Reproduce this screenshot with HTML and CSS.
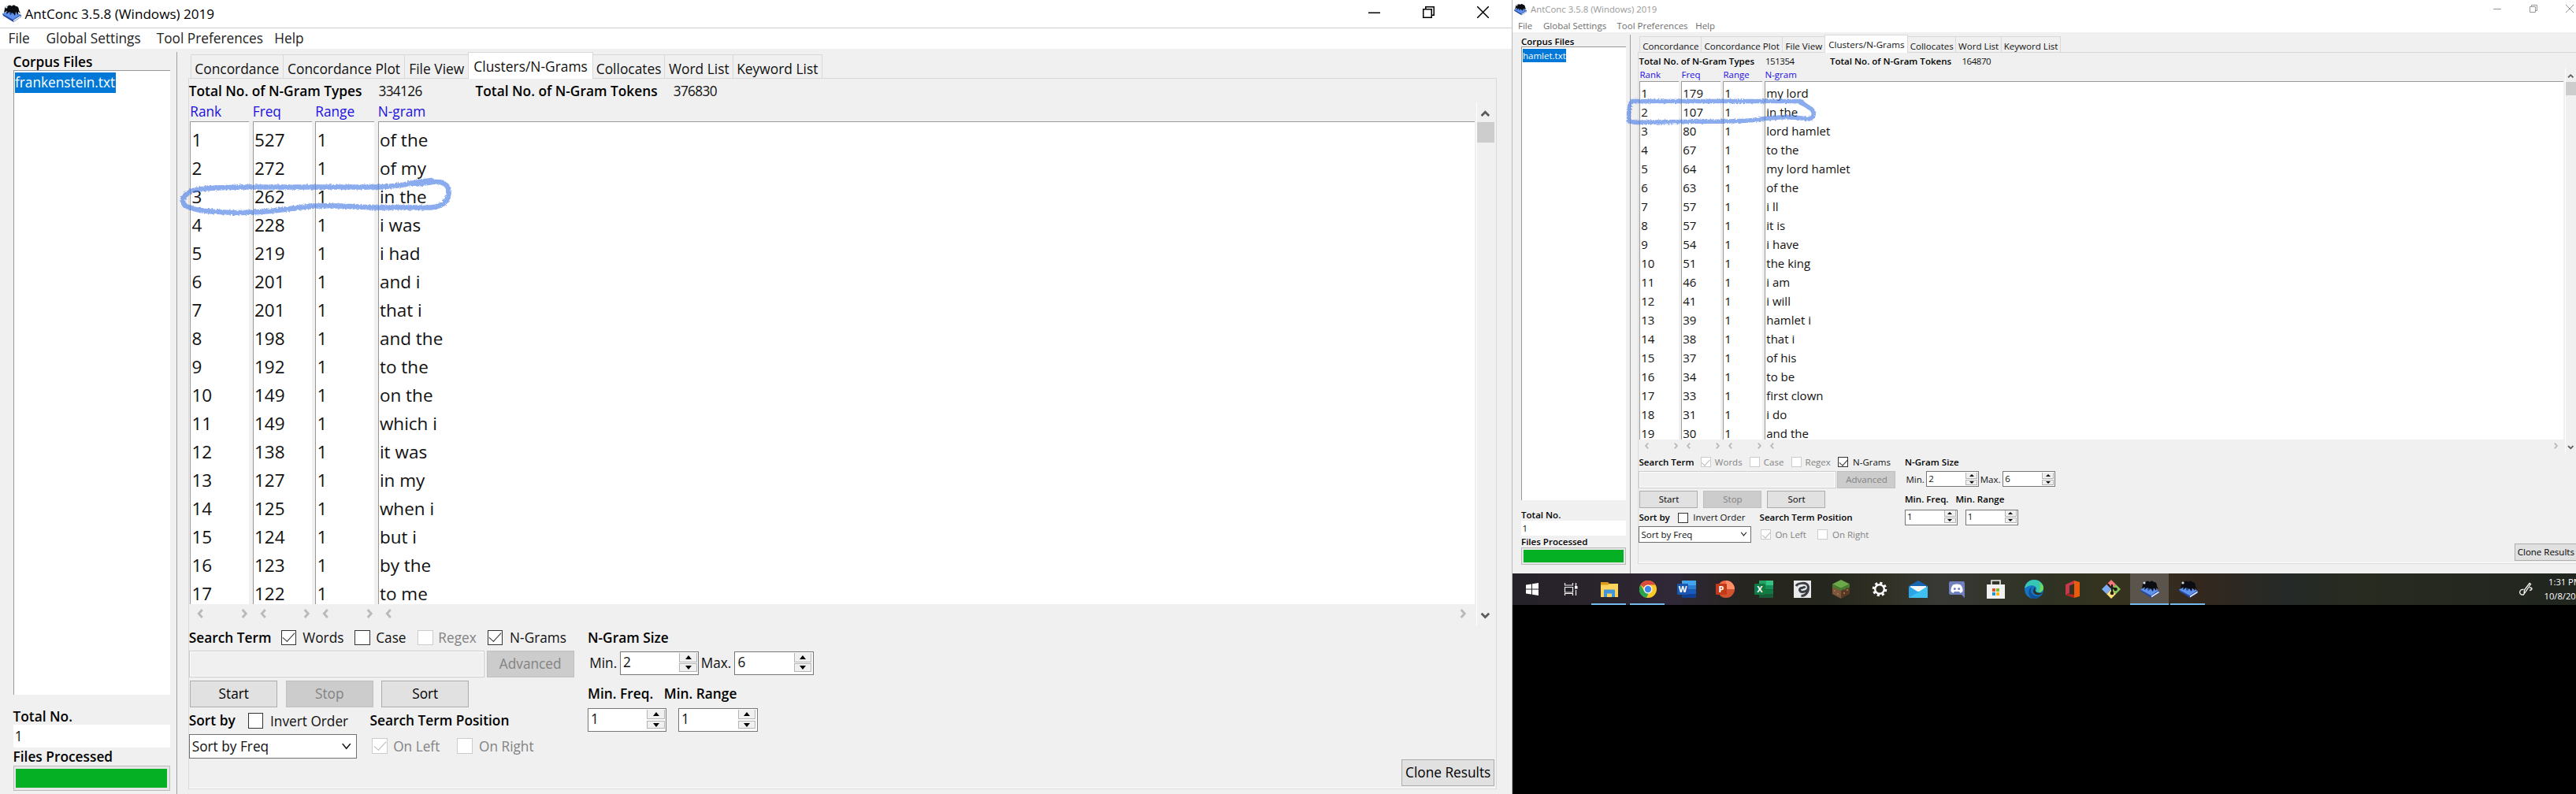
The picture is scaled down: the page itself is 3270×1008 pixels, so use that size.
FILE: index.html
```html
<!DOCTYPE html>
<html lang="en">
<head>
<meta charset="utf-8">
<title>AntConc 3.5.8 (Windows) 2019</title>
<link rel="stylesheet" href="styles.css">
</head>
<body>
<svg class="defs" aria-hidden="true">
  <defs>
    <symbol id="left" viewBox="0 0 8 12"><path d="M6.500 1 2 6l4.500 5" fill="none" stroke="currentColor" stroke-width="2.800"/></symbol>
    <symbol id="right" viewBox="0 0 8 12"><path d="M1.500 1 6 6l-4.500 5" fill="none" stroke="currentColor" stroke-width="2.800"/></symbol>
    <symbol id="up" viewBox="0 0 12 8"><path d="M1.500 7 6 2.500 10.500 7" fill="none" stroke="currentColor" stroke-width="2.600"/></symbol>
    <symbol id="down" viewBox="0 0 12 8"><path d="M1.500 1 6 5.500 10.500 1" fill="none" stroke="currentColor" stroke-width="2.600"/></symbol>
    <symbol id="drop" viewBox="0 0 12 8"><path d="M1.500 1 6 6.500 10.500 1" fill="none" stroke="currentColor" stroke-width="1.400"/></symbol>
    <symbol id="min" viewBox="0 0 10 10"><path d="M0 5.500h10" stroke="currentColor"/></symbol>
    <symbol id="restore" viewBox="0 0 10 10"><path d="M.5 2.500h7v7h-7zM2.500 2.500v-2h7v7h-2" fill="none" stroke="currentColor"/></symbol>
    <symbol id="close" viewBox="0 0 10 10"><path d="M0 0l10 10M10 0 0 10" stroke="currentColor"/></symbol>
    <symbol id="ant" viewBox="0 0 24 24">
      <path d="M0 12.500 10 8l14 6v2.500L14 23 1 15z" fill="#274a9e"/>
      <path d="M0 12.500 10 8l13 5.500L13.500 20z" fill="#5e92ec"/>
      <path d="M14 20.500l9.500-6v2L14 22.500z" fill="#dfe9fb"/>
      <path d="M3 6c0-3 2-4 4-3 1-2 4-1 5 0 1-2 4-2 5 0 3 0 4 2 4 5l2 4-3-2v4l-3-4-1 5-3-4-3 3-1-4-4 3 1-4-4 2z" fill="#0b0d12"/>
      <circle cx="5" cy="4" r="1.600" fill="#d8dde6"/><path d="M9 10l4 2-3 2z" fill="#2b4f9c"/>
    </symbol>
  </defs>
</svg>

<div class="desktop">
<section class="window win-a">
  <header class="titlebar"><svg class="appicon"><use href="#ant"/></svg><span>AntConc 3.5.8 (Windows) 2019</span>
    <div class="caption"><svg><use href="#min"/></svg><svg><use href="#restore"/></svg><svg><use href="#close"/></svg></div></header>
  <nav class="menu"><span>File</span><span>Global Settings</span><span>Tool Preferences</span><span>Help</span></nav>
  <div class="body">
    <aside class="side">
      <b>Corpus Files</b>
      <div class="files"><span>frankenstein.txt</span></div>
      <b class="total">Total No.</b>
      <div class="count">1</div>
      <b class="processed">Files Processed</b>
      <div class="progress"><i></i></div>
    </aside>
    <main class="main">
      <div class="tabs"><span>Concordance</span><span>Concordance Plot</span><span>File View</span><span class="on">Clusters/N-Grams</span><span>Collocates</span><span>Word List</span><span>Keyword List</span></div>
      <div class="pane">
        <div class="totals"><b>Total No. of N-Gram Types</b><span>334126</span><b>Total No. of N-Gram Tokens</b><span>376830</span></div>
        <div class="results">
          <div class="column"><h4>Rank</h4><pre>1
2
3
4
5
6
7
8
9
10
11
12
13
14
15
16
17</pre><div class="hs"><svg><use href="#left"/></svg><svg><use href="#right"/></svg></div></div>
          <div class="column"><h4>Freq</h4><pre>527
272
262
228
219
201
201
198
192
149
149
138
127
125
124
123
122</pre><div class="hs"><svg><use href="#left"/></svg><svg><use href="#right"/></svg></div></div>
          <div class="column"><h4>Range</h4><pre>1
1
1
1
1
1
1
1
1
1
1
1
1
1
1
1
1</pre><div class="hs"><svg><use href="#left"/></svg><svg><use href="#right"/></svg></div></div>
          <div class="column wide"><h4>N-gram</h4><pre>of the
of my
in the
i was
i had
and i
that i
and the
to the
on the
which i
it was
in my
when i
but i
by the
to me</pre><div class="hs"><svg><use href="#left"/></svg><svg><use href="#right"/></svg></div></div>
          <div class="vs"><svg><use href="#up"/></svg><i></i><svg><use href="#down"/></svg></div>
        </div>
        <div class="controls">
          <div class="search">
            <div class="checks"><b>Search Term</b><i class="box ticked"></i><span>Words</span><i class="box"></i><span>Case</span><i class="box off"></i><span class="dim">Regex</span><i class="box ticked"></i><span>N-Grams</span></div>
            <div class="query"><div class="input"></div><div class="btn dis">Advanced</div></div>
            <div class="actions"><div class="btn">Start</div><div class="btn dis">Stop</div><div class="btn">Sort</div></div>
            <div class="sorting"><b>Sort by</b><i class="box"></i><span>Invert Order</span><b>Search Term Position</b></div>
            <div class="position"><div class="select">Sort by Freq<svg><use href="#drop"/></svg></div><i class="box ticked off"></i><span class="dim">On Left</span><i class="box off"></i><span class="dim">On Right</span></div>
          </div>
          <div class="sizes">
            <b class="h1">N-Gram Size</b>
            <div class="spins s1"><span>Min.</span><div class="spin">2<i></i><i></i></div><span>Max.</span><div class="spin">6<i></i><i></i></div></div>
            <div class="labels"><b>Min. Freq.</b><b>Min. Range</b></div>
            <div class="spins s2"><div class="spin">1<i></i><i></i></div><div class="spin">1<i></i><i></i></div></div>
          </div>
          <div class="btn clone">Clone Results</div>
        </div>
      </div>
    </main>
  </div>
</section>

<div class="second">
<section class="window win-b">
  <header class="titlebar"><svg class="appicon"><use href="#ant"/></svg><span>AntConc 3.5.8 (Windows) 2019</span>
    <div class="caption"><svg><use href="#min"/></svg><svg><use href="#restore"/></svg><svg><use href="#close"/></svg></div></header>
  <nav class="menu"><span>File</span><span>Global Settings</span><span>Tool Preferences</span><span>Help</span></nav>
  <div class="body">
    <aside class="side">
      <b>Corpus Files</b>
      <div class="files"><span>hamlet.txt</span></div>
      <b class="total">Total No.</b>
      <div class="count">1</div>
      <b class="processed">Files Processed</b>
      <div class="progress"><i></i></div>
    </aside>
    <main class="main">
      <div class="tabs"><span>Concordance</span><span>Concordance Plot</span><span>File View</span><span class="on">Clusters/N-Grams</span><span>Collocates</span><span>Word List</span><span>Keyword List</span></div>
      <div class="pane">
        <div class="totals"><b>Total No. of N-Gram Types</b><span>151354</span><b>Total No. of N-Gram Tokens</b><span>164870</span></div>
        <div class="results">
          <div class="column"><h4>Rank</h4><pre>1
2
3
4
5
6
7
8
9
10
11
12
13
14
15
16
17
18
19</pre><div class="hs"><svg><use href="#left"/></svg><svg><use href="#right"/></svg></div></div>
          <div class="column"><h4>Freq</h4><pre>179
107
80
67
64
63
57
57
54
51
46
41
39
38
37
34
33
31
30</pre><div class="hs"><svg><use href="#left"/></svg><svg><use href="#right"/></svg></div></div>
          <div class="column"><h4>Range</h4><pre>1
1
1
1
1
1
1
1
1
1
1
1
1
1
1
1
1
1
1</pre><div class="hs"><svg><use href="#left"/></svg><svg><use href="#right"/></svg></div></div>
          <div class="column wide"><h4>N-gram</h4><pre>my lord
in the
lord hamlet
to the
my lord hamlet
of the
i ll
it is
i have
the king
i am
i will
hamlet i
that i
of his
to be
first clown
i do
and the</pre><div class="hs"><svg><use href="#left"/></svg><svg><use href="#right"/></svg></div></div>
          <div class="vs"><svg><use href="#up"/></svg><i></i><svg><use href="#down"/></svg></div>
        </div>
        <div class="controls">
          <div class="search">
            <div class="checks"><b>Search Term</b><i class="box ticked off"></i><span class="dim">Words</span><i class="box off"></i><span class="dim">Case</span><i class="box off"></i><span class="dim">Regex</span><i class="box ticked"></i><span>N-Grams</span></div>
            <div class="query"><div class="input"></div><div class="btn dis">Advanced</div></div>
            <div class="actions"><div class="btn">Start</div><div class="btn dis">Stop</div><div class="btn">Sort</div></div>
            <div class="sorting"><b>Sort by</b><i class="box"></i><span>Invert Order</span><b>Search Term Position</b></div>
            <div class="position"><div class="select">Sort by Freq<svg><use href="#drop"/></svg></div><i class="box ticked off"></i><span class="dim">On Left</span><i class="box off"></i><span class="dim">On Right</span></div>
          </div>
          <div class="sizes">
            <b class="h1">N-Gram Size</b>
            <div class="spins s1"><span>Min.</span><div class="spin">2<i></i><i></i></div><span>Max.</span><div class="spin">6<i></i><i></i></div></div>
            <div class="labels"><b>Min. Freq.</b><b>Min. Range</b></div>
            <div class="spins s2"><div class="spin">1<i></i><i></i></div><div class="spin">1<i></i><i></i></div></div>
          </div>
          <div class="btn clone">Clone Results</div>
        </div>
      </div>
    </main>
  </div>
</section>

<footer class="taskbar">
  <div class="task"><svg viewBox="0 0 24 24"><path d="M4 6.500l7-1v6H4zM12 5.300 20 4v7.500h-8zM4 12.500h7v6l-7-1zM12 12.500h8V20l-8-1.300z" fill="#fff"/></svg></div>
  <div class="task"><svg viewBox="0 0 24 24"><path d="M4.500 4v3h10V4M4.500 9.500h10v6.500h-10zM4.500 20v-2.500h10V20M18.500 4v4M18.500 13v7" fill="none" stroke="#eee" stroke-width="1.200"/><rect x="17" y="8" width="3.500" height="3.500" fill="#fff"/></svg></div>
  <div class="task run"><svg viewBox="0 0 24 24"><path d="M1 3h9l2 2v4H1z" fill="#d99a16"/><path d="M1 6.500h9l2-1.500h11v17H1z" fill="#fdd35c"/><path d="M5 22v-8.500q0-1 1-1h12q1 0 1 1V22h-4v-4.500H9V22z" fill="#3f96d8"/></svg></div>
  <div class="task run"><svg viewBox="0 0 24 24"><circle cx="12" cy="12" r="11" fill="#fbc926"/><path d="M2.500 6.500A11 11 0 0 1 21.500 6.500H12A5.500 5.500 0 0 0 7 9.800z" fill="#dc4a3d"/><path d="M2.500 6.500 7.500 15A5.500 5.500 0 0 0 12.500 17.400L10 23A11 11 0 0 1 2.500 6.500z" fill="#2aa353"/><circle cx="12" cy="12" r="5.500" fill="#f6f8f7"/><circle cx="12" cy="12" r="4.200" fill="#4285e8"/></svg></div>
  <div class="task"><svg viewBox="0 0 24 24"><path d="M6 1h18v6H6z" fill="#41a5ee"/><path d="M6 7h18v5.500H6z" fill="#2b7cd3"/><path d="M6 12.500h18V18H6z" fill="#185abd"/><path d="M6 18h18v5H6z" fill="#103f91"/><rect y="5" width="14" height="14" rx="1" fill="#1a56b0"/><text x="7" y="16" class="glyph">W</text></svg></div>
  <div class="task"><svg viewBox="0 0 24 24"><circle cx="13" cy="12" r="11" fill="#d35230"/><path d="M13 1a11 11 0 0 0-11 11h11z" fill="#ed6c47"/><path d="M13 1a11 11 0 0 1 11 11H13z" fill="#ff8f6b"/><rect y="5" width="14" height="14" rx="1" fill="#c13b1b"/><text x="7" y="16" class="glyph">P</text></svg></div>
  <div class="task"><svg viewBox="0 0 24 24"><path d="M6 1h9v6H6z" fill="#21a366"/><path d="M15 1h9v6h-9z" fill="#33c481"/><path d="M6 7h18v5.500H6z" fill="#17905a"/><path d="M6 12.500h18V18H6z" fill="#107c41"/><path d="M6 18h18v5H6z" fill="#185c37"/><rect y="5" width="14" height="14" rx="1" fill="#117a43"/><text x="7" y="16" class="glyph">X</text></svg></div>
  <div class="task"><svg viewBox="0 0 24 24"><path d="M1 1h22v22H1z" fill="#e7e8ea"/><path d="M4 8C6 4 18 2 19.500 9c.5 4-4 6-7 6.500-4 .5-5.500-4-2-5 2-.5 4-.5 5-2M10.500 20.500c5 0 9-4 9-10" fill="none" stroke="#3b3d42" stroke-width="3"/></svg></div>
  <div class="task"><svg viewBox="0 0 24 24"><path d="M12 0 23 5.500 12 11 1 5.500z" fill="#6aa84a"/><path d="M1 5.500 12 11v13L1 18z" fill="#7d553a"/><path d="M23 5.500 12 11v13l11-6z" fill="#573924"/><path d="M1 5.500 12 11v3l-3-2-2 1-2-3-2 1-2-2zM23 5.500 12 11v3l3-2 2 1 2-3 2 1 2-2z" fill="#467b30"/><path d="M3 13h2v2H3zM7 17h2v2H7zM15 16h2v2h-2zM19 12h2v2h-2z" fill="#98704e"/></svg></div>
  <div class="task"><svg viewBox="0 0 24 24"><circle cx="12" cy="12" r="5.800" fill="none" stroke="#fff" stroke-width="2.400"/><circle cx="12" cy="12" r="7.800" fill="none" stroke="#fff" stroke-width="3" stroke-dasharray="3.100 3.030"/></svg></div>
  <div class="task"><svg viewBox="0 0 24 24"><path d="M0 8 12 1l12 7v3H0z" fill="#1565b3"/><path d="M2 8h20v7H2z" fill="#f4f6f8"/><path d="M0 8v15h24z" fill="#2aa5e8"/><path d="M24 8v15H0l13-8z" fill="#3fc0f3"/></svg></div>
  <div class="task"><svg viewBox="0 0 24 24"><path d="M4 2h16q2 0 2 2v19l-4-4H4q-2 0-2-2V4q0-2 2-2z" fill="#7080bd"/><path d="M7 6.500q5-2 10 0 3 4 2.500 8.500L16.500 17 15 15H9l-1.500 2-3-2Q4 10.500 7 6.500z" fill="#fff"/><circle cx="9.300" cy="11.500" r="1.500" fill="#7080bd"/><circle cx="14.700" cy="11.500" r="1.500" fill="#7080bd"/></svg></div>
  <div class="task"><svg viewBox="0 0 24 24"><path d="M7 6.500V1h11v5.500" fill="none" stroke="#ececec" stroke-width="1.600"/><path d="M1 6h23v18H1z" fill="#f1f1f1"/><path d="M8 11h4v4H8z" fill="#e64f26"/><path d="M13 11h4v4h-4z" fill="#7cb82f"/><path d="M8 16h4v4H8z" fill="#2294dd"/><path d="M13 16h4v4h-4z" fill="#fbb813"/></svg></div>
  <div class="task"><svg viewBox="0 0 24 24"><circle cx="12" cy="12" r="12" fill="#1673c4"/><path d="M0 11C1 4 6 0 12 0c7 0 12 5 12 10 0 4-3 6-6 6-4 0-4-2-3-4 1-4-6-6-10-4C3 9 1 10 0 11z" fill="#35c6b4"/><path d="M19 3q5 3 5 8-1 5-6 5 3-6 1-13z" fill="#6bd85c"/><path d="M9 9c-3 5 0 12 7 12 3 0 5-1 6-3-3 6-9 6-12 6-5-3-7-11-1-15z" fill="#104f94"/><path d="M14 9.500c-2 4 0 7 5 7.500 2 0 3-.5 4-1-3 5-11 4-12-1 0-3 1-5 3-5.500z" fill="#2d2f22"/></svg></div>
  <div class="task"><svg viewBox="0 0 24 24"><path d="M3 6 14 1v4L8 7.500V17l-5 2.500z" fill="#c6384a"/><path d="M14 1l7 2v18l-7 2z" fill="#ea5b0c"/><path d="M3 19.500 8 18l6 1v4z" fill="#b5261f"/></svg></div>
  <div class="task"><svg viewBox="0 0 24 24"><path d="M12 0l6 6-6 6-6-6z" fill="#f3787b"/><path d="M24 12l-6 6-6-6 6-6z" fill="#87c95c"/><path d="M12 24l-6-6 6-6 6 6z" fill="#fbe07b"/><path d="M0 12l6-6 6 6-6 6z" fill="#7caef5"/><path d="M7 5l6 6M13 6v12M13 10l5 2" stroke="#1c1c17" stroke-width="2"/><circle cx="13" cy="17" r="2.300" fill="#1c1c17"/><circle cx="17.500" cy="12" r="2.300" fill="#1c1c17"/></svg></div>
  <div class="task active"><svg><use href="#ant"/></svg></div>
  <div class="task run"><svg><use href="#ant"/></svg></div>
  <div class="tray"><svg viewBox="0 0 17 18"><path d="M6 15 6.500 10 13 1.500l1.500 1L9 11z M8 12 11.500 7" fill="none" stroke="#f4f4f4" stroke-width="1.300"/><path d="M5.500 9.500C2 9 .5 11 .7 13.500.9 16 4 16.500 6 15.500M13 7c4 0 4 3 0 3.500" fill="none" stroke="#f4f4f4" stroke-width="1.300"/></svg>
    <div class="clock"><span>1:31 PM</span><span>10/8/2020</span></div></div>
</footer>
</div>
</div>

<svg class="ink" viewBox="0 0 3270 1008">
  <defs><filter id="crayon" x="-5%" y="-20%" width="110%" height="140%"><feTurbulence type="fractalNoise" baseFrequency=".45" numOctaves="2" seed="4" result="n"/><feDisplacementMap in="SourceGraphic" in2="n" scale="4"/></filter></defs>
  <g fill="none" stroke="#4f80e6" stroke-opacity=".66" stroke-linecap="round" stroke-linejoin="round" filter="url(#crayon)">
    <path stroke-width="6.500" d="M548 229C520 232 510 237 480 237.500H311C280 238 255 239 245 242 230 248 230 256 235 261 246 267 260 269 303 270 350 270 365 264 400 261.500 430 260 450 263 484 263.500H547C562 262 568 257 569.500 246 570 236 566 232 556 231 548 230 540 234 528 233"/>
    <path stroke-width="5.500" d="M2286 128.500H2140L2072 128.500C2068 132 2067 142 2068 154L2076 155.500 2130 154.500C2180 154 2205 155 2225 152.500 2250 149 2262 148 2275 149L2297 151C2304 148 2303 143 2300 139 2296 135 2290 134 2287 129M2285 130l6 3"/>
  </g>
</svg>
</body>
</html>
```
FILE: styles.css
```css
* { box-sizing: border-box; }
body { margin: 0; width: 3270px; height: 1008px; overflow: hidden; position: relative; background: #000; font-family: "Open Sans", "Noto Sans", sans-serif; }
.defs { position: absolute; width: 0; height: 0; }
.desktop { display: flex; height: 1008px; overflow: hidden; }
.second { flex: 0 0 1366px; }

/* every length inside a window is a multiple of its own --u */
.window { display: flex; flex-direction: column; background: #f0f0f0; color: #111; font-size: calc(var(--u) * 11.5); line-height: 1; white-space: nowrap; overflow: hidden; }
.win-a { --u: 1.5px; --head: #000; --menu: #222; --title-gap: 3; --row-top: 3; flex: 0 0 1920px; height: 1021px; border-right: 1px solid #bbb; }
.win-b { --u: 1px; --head: #999; --menu: #6d6d6d; --title-gap: 5; --row-top: 2; width: 1366px; height: 728px; }
.window b { font-weight: 600; font-size: calc(var(--u) * 11.55); color: #000; }
.window svg { display: block; }

.titlebar { flex: none; display: flex; align-items: center; height: calc(var(--u) * 24); padding-left: calc(var(--u) * 2); background: #fff; color: var(--head); font-size: calc(var(--u) * 11.4); }
.appicon { width: calc(var(--u) * 16); height: calc(var(--u) * 16); margin-top: calc(var(--u) * -1); margin-right: calc(var(--u) * var(--title-gap)); }
.caption { display: flex; margin-left: auto; margin-right: calc(var(--u) * 1.2); height: 100%; color: var(--head); }
.caption svg { width: calc(var(--u) * 10); height: calc(var(--u) * 10); margin: calc(var(--u) * 5.500) calc(var(--u) * 18); }
.menu { flex: none; display: grid; grid-template-columns: 32fr 93.500fr 99.700fr 60fr; width: calc(var(--u) * 285.200); align-items: center; height: calc(var(--u) * 17.300); background: #fff; color: var(--menu); box-shadow: calc(var(--u) * 285) 0 #fff, calc(var(--u) * 570) 0 #fff, calc(var(--u) * 855) 0 #fff, calc(var(--u) * 1140) 0 #fff; }
.menu span { padding-left: calc(var(--u) * 7); }
.win-a .titlebar { border-bottom: 1px solid #ccc; }

.body { flex: 1; display: flex; min-height: 0; }
.side { flex: none; display: flex; flex-direction: column; width: calc(var(--u) * 149.300); padding: calc(var(--u) * 5) calc(var(--u) * 5.300) calc(var(--u) * 11.300) calc(var(--u) * 11); }
.side b { line-height: calc(var(--u) * 13); }
.files { flex: 1; background: #fff; border: solid #999; border-width: 1px 0 0 1px; padding: calc(var(--u) * 1.500) 0 0 calc(var(--u) * 1); }
.files span { display: inline-block; padding-right: calc(var(--u) * .3); line-height: calc(var(--u) * 17); background: #0078d7; color: #fff; }
.side .total { margin-top: calc(var(--u) * 11.500); line-height: calc(var(--u) * 14); }
.count { height: calc(var(--u) * 19); line-height: calc(var(--u) * 19.5); padding-left: calc(var(--u) * 1.500); background: #fff; }
.side .processed { line-height: calc(var(--u) * 15.500); }
.progress { height: calc(var(--u) * 21.500); padding: calc(var(--u) * 1.800); border: 1px solid #bcbcbc; background: #e6e6e6; }
.progress i { display: block; height: 100%; background: #06b025; }

.main { flex: 1; display: flex; flex-direction: column; min-width: 0; margin-top: calc(var(--u) * 2.700); border-left: 1px solid #a0a0a0; padding: 0 calc(var(--u) * 12.700) calc(var(--u) * 12.500) calc(var(--u) * 9.200); }
.tabs { flex: none; display: flex; align-items: flex-end; height: calc(var(--u) * 22.300); padding-left: calc(var(--u) * 2); }
.tabs span { height: calc(var(--u) * 20); line-height: calc(var(--u) * 23); text-align: center; border: 1px solid #d9d9d9; border-width: 1px 1px 0 0; font-size: calc(var(--u) * 11.6); }
.tabs span:nth-child(1) { width: calc(var(--u) * 78.700); border-left-width: 1px; }
.tabs span:nth-child(2) { width: calc(var(--u) * 103); }
.tabs span:nth-child(3) { width: calc(var(--u) * 53.300); border-right: 0; }
.tabs span:nth-child(4) { width: calc(var(--u) * 105.800); }
.tabs span:nth-child(5) { width: calc(var(--u) * 61); }
.tabs span:nth-child(6) { width: calc(var(--u) * 57.800); }
.tabs span:nth-child(7) { width: calc(var(--u) * 75); }
.tabs .on { height: calc(var(--u) * 22.300 + 1px); margin-bottom: -1px; background: #fff; border-left-width: 1px; line-height: calc(var(--u) * 23); z-index: 1; }
.pane { flex: 1; min-height: 0; display: flex; flex-direction: column; border: 1px solid #d9d9d9; box-shadow: inset 0 -1px #fff; }
.totals { flex: none; display: grid; grid-template-columns: 160.500fr 82fr 167.500fr 90fr; width: calc(var(--u) * 500); height: calc(var(--u) * 20); align-items: center; }
.totals span { letter-spacing: calc(var(--u) * -.45); }

.results { flex: 1; min-height: 0; display: flex; padding-left: calc(var(--u) * 1); }
.column { flex: 0 0 calc(var(--u) * 53); display: flex; flex-direction: column; padding-right: calc(var(--u) * 3); }
.column.wide { flex: 1; padding-right: calc(var(--u) * 1.500); }
.column h4 { margin: 0; font-weight: 400; line-height: calc(var(--u) * 16); color: #1c0fe0; }
.column pre { flex: 1 1 0; min-height: 0; overflow: hidden; margin: 0; padding: calc(var(--u) * var(--row-top)) 0 0 calc(var(--u) * .8); font: calc(var(--u) * 15)/calc(var(--u) * 24) "Open Sans", "Noto Sans", sans-serif; background: #fff; border: solid #999; border-width: 1px 0 0 1px; }
.hs { flex: none; display: flex; justify-content: space-between; align-items: center; height: calc(var(--u) * 18); padding: 0 calc(var(--u) * .5) calc(var(--u) * 1.5) calc(var(--u) * 5.5); color: #b9b9b9; }
.wide .hs { padding-right: calc(var(--u) * 6); }
.hs svg { width: calc(var(--u) * 7); height: calc(var(--u) * 8); }
.vs { flex: 0 0 calc(var(--u) * 16.800); display: flex; flex-direction: column; align-items: center; border-left: calc(var(--u) * 1) solid #fff; padding: calc(var(--u) * 5.500) calc(var(--u) * 1.500) calc(var(--u) * 4.500) 0; color: #5a5a5a; }
.vs svg { flex: none; width: calc(var(--u) * 8.500); height: calc(var(--u) * 6.500); }
.vs i { width: 100%; height: calc(var(--u) * 17); margin-top: calc(var(--u) * 4.500); margin-bottom: auto; background: #cdcdcd; }

.controls { flex: none; display: flex; height: calc(var(--u) * 138.500); }
.search { flex: 0 0 calc(var(--u) * 337.500); }
.checks, .sorting, .position { display: grid; align-items: center; }
.checks { grid-template-columns: 78.200fr 18.300fr 44fr 18fr 35.300fr 17.500fr 41.700fr 18.900fr 66fr; height: calc(var(--u) * 21); }
.box { display: block; width: calc(var(--u) * 13); height: calc(var(--u) * 13); border: 1px solid #333; background: #fff; }
.box.ticked::after { content: ""; display: block; width: calc(var(--u) * 9); height: calc(var(--u) * 4.500); margin: calc(var(--u) * 1.700) auto 0; border: solid #333; border-width: 0 0 calc(var(--u) * 1.200) calc(var(--u) * 1.200); transform: rotate(-48deg); }
.box.off { border-color: #ccc; }
.box.ticked.off::after { border-color: #bbb; }
.dim { color: #838383; }
.query { display: flex; gap: calc(var(--u) * 1.500); margin-top: calc(var(--u) * .7); }
.input { width: calc(var(--u) * 250.500); height: calc(var(--u) * 22.500); border: 1px solid #ccc; box-shadow: inset 0 0 0 1px #fff; }
.btn { display: flex; align-items: center; justify-content: center; width: calc(var(--u) * 74); height: calc(var(--u) * 22.700); border: 1px solid #adadad; background: #e1e1e1; color: #000; }
.btn.dis { background: #ccc; border-color: #bfbfbf; color: #838383; }
.query .btn { height: calc(var(--u) * 22.500); }
.actions { display: flex; gap: calc(var(--u) * 7); padding: calc(var(--u) * 2.500) 0 0 calc(var(--u) * 1); }
.sorting { grid-template-columns: 50fr 18.900fr 84.300fr 184.500fr; height: calc(var(--u) * 23.4); }
.position { grid-template-columns: 155fr 18fr 54fr 18.600fr 92fr; margin-top: calc(var(--u) * -.6); }
.select { display: flex; align-items: center; justify-content: space-between; width: calc(var(--u) * 142.500); height: calc(var(--u) * 20.500); padding: 0 calc(var(--u) * 4) 0 calc(var(--u) * 2); border: 1px solid #707070; background: #fff; }
.select svg { width: calc(var(--u) * 9); height: calc(var(--u) * 6); }
.sizes { flex: 1; }
.sizes .h1 { display: block; line-height: calc(var(--u) * 21); }
.spins { display: flex; align-items: center; height: calc(var(--u) * 20); }
.s1 { margin-top: calc(var(--u) * 1.3); }
.s1 > span { width: calc(var(--u) * 27.300); padding-left: calc(var(--u) * 1.5); }
.s1 > span + .spin + span { width: calc(var(--u) * 30); }
.s2 { gap: calc(var(--u) * 9.7); }
.labels { display: flex; height: calc(var(--u) * 28.300); padding-top: calc(var(--u) * 10); align-items: flex-start; }
.labels b:first-child { width: calc(var(--u) * 64.500); }
.spin { display: grid; grid-template-columns: 1fr calc(var(--u) * 15); grid-template-rows: calc(var(--u) * 8) calc(var(--u) * 7); row-gap: calc(var(--u) * 1); width: calc(var(--u) * 67); height: calc(var(--u) * 20); padding: calc(var(--u) * .7) calc(var(--u) * 1) 0 calc(var(--u) * 2); border: 1px solid #777; background: #fff; line-height: calc(var(--u) * 16); }
.spin i { grid-column: 2; grid-row: 2; display: flex; align-items: center; justify-content: center; border: 1px solid #b5b5b5; background: #f0f0f0; }
.spin i:first-child { grid-row: 1; border-top: 0; }
.spin i::after { content: ""; border: solid transparent; border-width: 0 calc(var(--u) * 3) calc(var(--u) * 3.500); border-bottom-color: #000; }
.spin i:last-child::after { border-width: calc(var(--u) * 3.500) calc(var(--u) * 3) 0; border-top-color: #000; }
.clone { align-self: flex-end; width: calc(var(--u) * 79); margin: 0 calc(var(--u) * 1) calc(var(--u) * 2.300) 0; }

.taskbar { display: flex; height: 40px; color: #fff; background: linear-gradient(90deg, #26222a 0, #2a242c 120px, #302838 200px, #26251f 300px, #25261d 400px, #303024 470px, #383935 540px, #2f3223 680px, #35331f 770px, #34281e 870px, #252928 980px, #282b20 1070px, #20251f 1366px); }
.task { flex: none; width: 49px; height: 40px; display: flex; justify-content: center; align-items: center; position: relative; }
.task svg { width: 24px; height: 24px; }
.task.run { border-bottom: 2px solid; border-image: linear-gradient(90deg, transparent 4px, #76b9ed 4px, #76b9ed 44px, transparent 44px) 2; border-width: 0 0 2px; padding-top: 2px; }
.task.active { background: #5a544c; border-bottom: 2px solid #76b9ed; padding-top: 2px; }
.glyph { font: 700 11px "Open Sans", sans-serif; fill: #fff; text-anchor: middle; }
.tray { display: flex; align-items: center; margin-left: auto; }
.tray svg { width: 17px; height: 18px; margin-right: 11px; }
.clock { width: 60px; display: grid; grid-template-rows: 18px 18px; text-align: center; font-size: 11.200px; line-height: 18px; margin-bottom: 1px; white-space: nowrap; }
.ink { position: absolute; left: 0; top: 0; width: 3270px; height: 1008px; pointer-events: none; }
```
